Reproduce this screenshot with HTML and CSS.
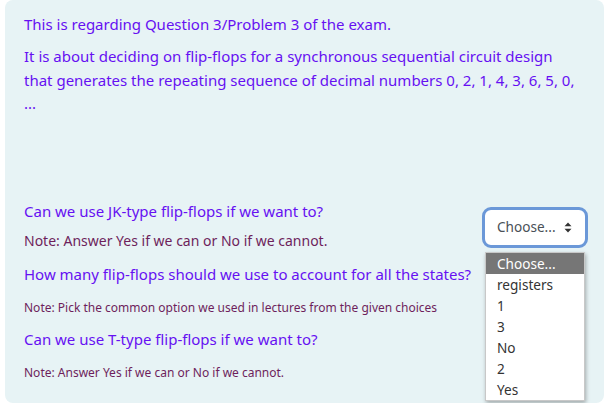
FILE: index.html
```html
<!DOCTYPE html>
<html>
<head>
<meta charset="utf-8">
<link rel="stylesheet" href="styles.css">
</head>
<body>
<div class="panel">
  <p class="intro">This is regarding Question 3/Problem 3 of the exam.</p>
  <p class="intro">It is about deciding on flip-flops for a synchronous sequential circuit design<br>that generates the repeating sequence of decimal numbers 0, 2, 1, 4, 3, 6, 5, 0,<br>...</p>
  <div class="questions">
    <div class="qrow">
      <div class="qtext">
        <p class="q q1">Can we use JK-type flip-flops if we want to?</p>
        <p class="note note-lg">Note: Answer Yes if we can or No if we cannot.</p>
      </div>
      <div class="selectwrap">
        <div class="select">
          <span>Choose...</span>
          <svg class="caret" width="8" height="11" viewBox="0 0 8 11"><path d="M4 0.5 L7.5 4.3 L0.5 4.3 Z M4 10.5 L7.5 6.7 L0.5 6.7 Z" fill="#333"/></svg>
        </div>
        <ul class="dropdown">
          <li class="active">Choose...</li>
          <li>registers</li>
          <li>1</li>
          <li>3</li>
          <li>No</li>
          <li>2</li>
          <li>Yes</li>
        </ul>
      </div>
    </div>
    <p class="q">How many flip-flops should we use to account for all the states?</p>
    <p class="note note-sm">Note: Pick the common option we used in lectures from the given choices</p>
    <p class="q">Can we use T-type flip-flops if we want to?</p>
    <p class="note note-sm">Note: Answer Yes if we can or No if we cannot.</p>
  </div>
</div>
</body>
</html>
```
FILE: styles.css
```css
html, body {
  margin: 0;
  padding: 0;
  background: #ffffff;
}
body {
  font-family: "Noto Sans", "Open Sans", sans-serif;
  font-size: 15px;
  line-height: 23.5px;
}
.panel {
  margin: 0 1px 0 5px;
  height: 403px;
  box-sizing: border-box;
  background: #e7f3f5;
  border-radius: 8px;
  padding: 13px 19px 0 19px;
}
p {
  margin: 0;
}
.intro {
  color: #6610f2;
  margin-bottom: 8.5px;
}
.questions {
  margin-top: 83px;
}
.qrow {
  display: flex;
  justify-content: space-between;
  align-items: flex-start;
}
.q {
  color: #6610f2;
  line-height: 24px;
  margin-bottom: 11px;
}
.q.q1 {
  margin-bottom: 7.5px;
}
.note {
  color: #6e1f5c;
  line-height: 22px;
  margin-bottom: 8px;
}
.note-lg {
  font-size: 14px;
  margin-bottom: 9.5px;
}
.note-sm {
  font-size: 12px;
}
.selectwrap {
  position: relative;
  margin-top: 8px;
  margin-right: -3px;
}
.select {
  width: 106px;
  height: 41px;
  box-sizing: border-box;
  background: #fff;
  border: 3px solid #6b98d8;
  border-radius: 9px;
  display: flex;
  align-items: center;
  justify-content: space-between;
  padding: 0 13px 0 12px;
  color: #495057;
  font-size: 13.6px;
}
.caret {
  display: block;
}
.dropdown {
  position: absolute;
  top: 45px;
  left: 3px;
  width: 100px;
  box-sizing: border-box;
  margin: 0;
  padding: 0;
  list-style: none;
  background: #fff;
  border: 1px solid #c8c8c8;
  box-shadow: 1px 2px 4px rgba(0,0,0,0.3);
  font-size: 13.6px;
  line-height: 21px;
  color: #333;
}
.dropdown li {
  padding: 0 0 0 11px;
}
.dropdown li.active {
  background: #767676;
  color: #fff;
}
```
